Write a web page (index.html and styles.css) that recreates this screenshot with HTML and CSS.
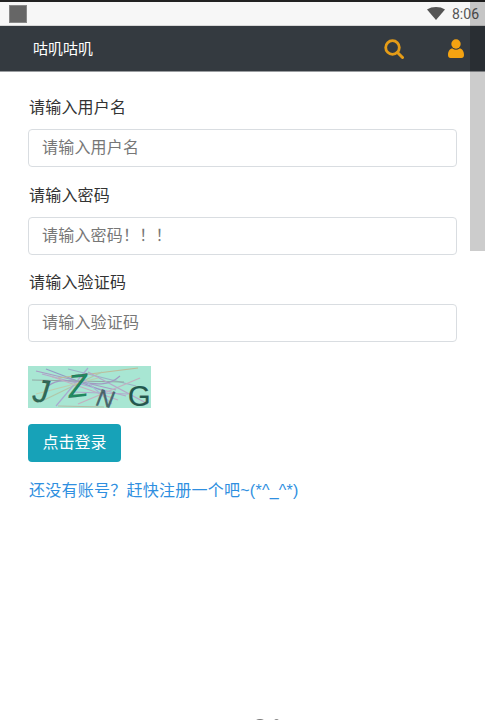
FILE: index.html
```html
<!DOCTYPE html>
<html lang="zh">
<head>
<meta charset="utf-8">
<title>登录</title>
<link rel="stylesheet" href="styles.css">
</head>
<body>
  <div class="statusbar">
    <span class="status-square"></span>
    <span class="status-right">
      <svg class="wifi" width="18" height="13" viewBox="0 0 18 13"><path d="M0 2.500C2.500 .8 5.700 0 9 0s6.500 .8 9 2.500L9 13z" fill="#555"/></svg>
      <span class="clock">8:06</span>
    </span>
  </div>

  <nav class="navbar">
    <a class="brand" href="#">咕叽咕叽</a>
    <span class="nav-icons">
      <svg width="20" height="20" viewBox="0 0 20 20"><circle cx="8.500" cy="8.500" r="6.800" fill="none" stroke="#e59c17" stroke-width="2.800"/><path d="M13.500 13.500L18.500 18.500" stroke="#e59c17" stroke-width="3" stroke-linecap="round"/></svg>
      <svg width="16" height="19" viewBox="0 0 16 19"><circle cx="8" cy="5" r="4.700" fill="#f5a311"/><path d="M0 16c0-4 2-6.500 4.500-6.500 1 .8 2.200 1.200 3.500 1.200s2.500-.4 3.500-1.200C14 9.500 16 12 16 16c0 2-1 3-2.500 3h-11C1 19 0 18 0 16z" fill="#f5a311"/></svg>
    </span>
  </nav>

  <main class="content">
    <form>
      <div class="form-group">
        <label for="username">请输入用户名</label>
        <input id="username" class="form-control" type="text" placeholder="请输入用户名">
      </div>
      <div class="form-group">
        <label for="password">请输入密码</label>
        <input id="password" class="form-control" type="text" placeholder="请输入密码！！！">
      </div>
      <div class="form-group">
        <label for="code">请输入验证码</label>
        <input id="code" class="form-control" type="text" placeholder="请输入验证码">
      </div>

      <svg class="captcha" width="123" height="42" viewBox="0 0 123 42">
        <rect width="123" height="42" fill="#a8e6d3"/>
        <g fill="none" stroke-width="1.200" opacity="0.85">
          <path d="M8 5L88 24" stroke="#a98fc4"/>
          <path d="M14 8L98 30" stroke="#b79ac9"/>
          <path d="M18 3L78 26" stroke="#8f8fc4"/>
          <path d="M40 3L108 20" stroke="#9aa7c6"/>
          <path d="M30 12L110 2" stroke="#c4b38f"/>
          <path d="M12 36L74 6" stroke="#b3c2a2"/>
          <path d="M28 40L60 2" stroke="#a9a0d0"/>
          <path d="M50 38L112 12" stroke="#c9a6bd"/>
          <path d="M4 14L96 16" stroke="#8f9f9c"/>
          <path d="M60 6L120 38" stroke="#b89cc8"/>
          <path d="M30 40L76 41" stroke="#b7b7a0"/>
          <path d="M20 20C40 4 70 30 92 10" stroke="#9f8fc0"/>
          <path d="M22 10L90 34" stroke="#c6a4c0"/>
          <path d="M45 26L100 28" stroke="#b59fcd"/>
          <path d="M8 28L70 12" stroke="#c2c8a8"/>
          <path d="M50 8L84 38" stroke="#a6b0d4"/>
        </g>
        <text class="captcha-char" x="5" y="36" font-size="32" fill="#2f6b57" transform="rotate(6 12 25)">J</text>
        <text class="captcha-char" x="40" y="31" font-size="32" fill="#1f8a60" transform="rotate(-6 48 20)">Z</text>
        <text class="captcha-char" x="69" y="41" font-size="24" fill="#4a6a70" transform="rotate(10 78 30)">N</text>
        <text class="captcha-char captcha-last" x="100" y="40" font-size="29" fill="#22594e">G</text>
      </svg>

      <button class="btn" type="button">点击登录</button>
      <a class="register" href="#">还没有账号？赶快注册一个吧~(*^_^*)</a>
    </form>
  </main>

  <footer class="footer">
    <span class="footer-arc"></span>
    <span class="footer-dot"></span>
  </footer>

  <div class="scrollbar"></div>
</body>
</html>
```

FILE: styles.css
```css
html, body {
  height: 720px;
  overflow: hidden;
}

body {
  margin: 0;
  background: #fff;
  color: #333;
  font: 16px/24px "Liberation Sans", "Noto Sans CJK SC", sans-serif;
}

.statusbar {
  height: 23px;
  border-top: 2px solid #222;
  border-bottom: 1px solid #d8d8d8;
  background: #f7f7f7;
  display: flex;
  align-items: center;
  justify-content: space-between;
  padding: 0 6px 0 9px;
}

.status-square {
  width: 16px;
  height: 16px;
  background: #666;
  border: 1px solid #888;
}

.status-right {
  display: flex;
  align-items: center;
  gap: 7px;
}

.clock {
  font: 14px "Roboto", sans-serif;
  color: #555;
}

.navbar {
  height: 45px;
  background: #343a40;
  border-bottom: 1px solid #9a9da0;
  display: flex;
  align-items: center;
  justify-content: space-between;
  padding: 0 21px 0 33px;
}

.brand {
  color: #fff;
  font-size: 15px;
  text-decoration: none;
}

.nav-icons {
  display: flex;
  align-items: center;
  gap: 44px;
}

.content {
  padding: 24px 28px 0;
}

.form-group {
  margin-bottom: 16.500px;
}

label {
  display: block;
  margin-bottom: 9px;
  padding-left: 1px;
  color: #333;
  letter-spacing: 0.2px;
}

.form-control {
  display: block;
  box-sizing: border-box;
  width: 100%;
  height: 38px;
  padding: 0 13px;
  border: 1px solid #d9dde1;
  border-radius: 4px;
  background: #fff;
  font: inherit;
  letter-spacing: 0.2px;
}

.form-control::placeholder {
  color: #777;
  opacity: 1;
}

.captcha {
  display: block;
  margin-top: 24px;
  overflow: visible;
}

.captcha-char {
  font-family: "Liberation Sans", sans-serif;
  font-style: italic;
  stroke: currentColor;
  stroke-width: 0.2px;
}

.captcha-last {
  font-style: normal;
}

.btn {
  display: block;
  box-sizing: border-box;
  width: 93px;
  height: 38px;
  margin-top: 16px;
  padding: 0;
  border: 0;
  border-radius: 4px;
  background: #17a2b8;
  color: #fff;
  font: inherit;
}

.register {
  display: block;
  margin-top: 17px;
  padding-left: 1px;
  color: #2f8fe0;
  text-decoration: none;
  letter-spacing: 0.25px;
}

/* only the top edge of this shows at the bottom of the window */
.footer {
  display: flex;
  gap: 6px;
  height: 2px;
  margin: 216px 0 0 252px;
  overflow: hidden;
}

.footer-arc {
  width: 16px;
  height: 16px;
  border-radius: 50%;
  background: #777;
}

.footer-dot {
  width: 5px;
  height: 5px;
  border-radius: 50%;
  background: #888;
}

.scrollbar {
  position: absolute;
  top: 0;
  right: 0;
  width: 15px;
  height: 251px;
  background: rgba(0, 0, 0, 0.2);
}
```
